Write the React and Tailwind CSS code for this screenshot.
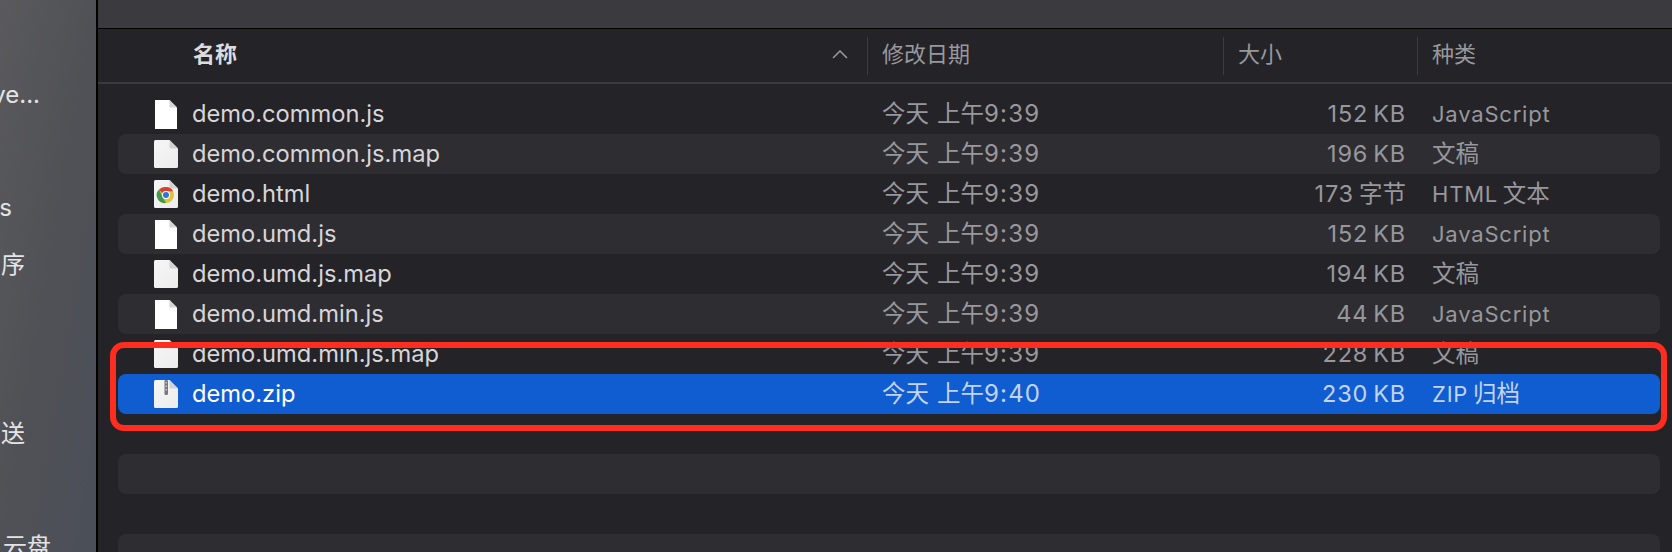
const files = [
  { name: 'demo.common.js', date: '今天 上午9:39', size: '152\u2009KB', kind: 'JavaScript', icon: 'js' },
  { name: 'demo.common.js.map', date: '今天 上午9:39', size: '196\u2009KB', kind: '文稿', icon: 'doc' },
  { name: 'demo.html', date: '今天 上午9:39', size: '173\u2009字节', kind: 'HTML\u2009文本', icon: 'chrome' },
  { name: 'demo.umd.js', date: '今天 上午9:39', size: '152\u2009KB', kind: 'JavaScript', icon: 'js' },
  { name: 'demo.umd.js.map', date: '今天 上午9:39', size: '194\u2009KB', kind: '文稿', icon: 'doc' },
  { name: 'demo.umd.min.js', date: '今天 上午9:39', size: '44\u2009KB', kind: 'JavaScript', icon: 'js' },
  { name: 'demo.umd.min.js.map', date: '今天 上午9:39', size: '228\u2009KB', kind: '文稿', icon: 'doc' },
  { name: 'demo.zip', date: '今天 上午9:40', size: '230\u2009KB', kind: 'ZIP\u2009归档', icon: 'zip', selected: true },
  {},
  {},
  {},
  {},
];

const sidebarItems = [
  { label: 've...', width: 'w-[40px]' },
  {},
  {},
  {},
  { label: 's', width: 'w-[12px]' },
  {},
  { label: '序', width: 'w-[25px]' },
  {},
  {},
  {},
  {},
  {},
  { label: '送', width: 'w-[25px]' },
  {},
  {},
  {},
  { label: '云盘', width: 'w-[51px]' },
];

// Latin and CJK runs need different sizes and tracking to match the macOS font
const MixedText = ({ text, latinClass }) =>
  text.split(/([\u4e00-\u9fff]+)/).map((part, i) =>
    i % 2 === 1 ? (
      <span key={i} className="text-[23.5px] tracking-normal">{part}</span>
    ) : (
      <span key={i} className={latinClass}>{part}</span>
    )
  );

const FileIcon = ({ type }) => {
  if (type === 'js') {
    return (
      <svg width="24" height="30" viewBox="0 0 24 30" className="shrink-0">
        <path d="M1 1H15.5L23 8.5V30H1Z" fill="#ffffff" />
        <path d="M15.5 1V8.5H23Z" fill="#d4d4d6" />
      </svg>
    );
  }
  return (
    <svg width="24" height="30" viewBox="0 0 24 30" className="shrink-0">
      <defs>
        <linearGradient id="page" x1="0" y1="0" x2="1" y2="1">
          <stop offset="0" stopColor="#f6f6f6" />
          <stop offset="1" stopColor="#ececec" />
        </linearGradient>
      </defs>
      <path d="M1.5 1H15.5L24 9.5V27.5Q24 29 22.5 29H1.5Q0 29 0 27.5V2.5Q0 1 1.5 1Z" fill="url(#page)" />
      <path d="M15.5 1V8Q15.5 9.5 17 9.5H24Z" fill="#d2d2d4" />
      {type === 'chrome' && (
        <g>
          <circle cx="12" cy="16" r="8" fill="#e0c33a" />
          <path d="M12 8A8 8 0 0 1 19 12.2H12A4 4 0 0 0 8.4 14.3L5 10.5A8 8 0 0 1 12 8Z" fill="#d8402f" />
          <path d="M5 10.5L8.6 18L12 24A8 8 0 0 1 5 10.5Z" fill="#3f9a4a" />
          <circle cx="12" cy="16" r="4" fill="#ffffff" />
          <circle cx="12" cy="16" r="3" fill="#2f73e0" />
        </g>
      )}
      {type === 'zip' && (
        <g>
          <rect x="10.5" y="1" width="3.5" height="15" rx="1.2" fill="#77787c" />
          <rect x="11.5" y="3" width="1.5" height="1.5" fill="#c4c4c6" />
          <rect x="11.5" y="6.5" width="1.5" height="1.5" fill="#c4c4c6" />
          <rect x="11.5" y="10" width="1.5" height="1.5" fill="#c4c4c6" />
        </g>
      )}
    </svg>
  );
};

const FileRow = ({ file, striped }) => {
  const bg = file.selected ? 'bg-[#0f5dd0]' : striped ? 'bg-[#2e2d32]' : '';
  return (
    <div className={`flex items-center h-10 shrink-0 rounded-[8px] ${bg}`}>
      {file.name && (
        <>
          <div className={`flex items-center w-[764px] pl-9 gap-[14px] text-[23.7px] ${file.selected ? 'text-white' : 'text-[#d6d6d8]'}`}>
            <FileIcon type={file.icon} />
            <span>{file.name}</span>
          </div>
          <div className={`flex items-center flex-1 ${file.selected ? 'text-[#c3d3f1]' : 'text-[#98989c]'}`}>
            <span className="w-[356px]"><MixedText text={file.date} latinClass="text-[24px] tracking-[1.2px]" /></span>
            <span className="w-[168px] text-right"><MixedText text={file.size} latinClass="text-[23.5px] tracking-[0.8px]" /></span>
            <span className="ml-[26px]"><MixedText text={file.kind} latinClass="tracking-[0.8px]" /></span>
          </div>
        </>
      )}
    </div>
  );
};

const HeaderCell = ({ label, width }) => (
  <div className={`flex items-center h-[38px] border-l border-[#3c3b40] pl-[14px] pb-[3px] text-[#98989c] ${width}`}>
    {label}
  </div>
);

export default function App() {
  return (
    <div className="relative flex h-[552px] w-[1672px] overflow-hidden bg-[#242328] text-[22px] leading-none font-['Inter','Noto_Sans_CJK_SC',sans-serif]">
      {/* sidebar, cut off on the left */}
      <div className="flex flex-col w-[96px] shrink-0 pt-[81px] overflow-hidden bg-gradient-to-br from-[#5a5a5d] via-[#505156] to-[#4a4f58] text-[24px] text-[#e4e4e6]">
        {sidebarItems.map((item, i) => (
          <div key={i} className={`flex items-center justify-end h-[28.25px] shrink-0 whitespace-nowrap ${item.width || ''}`}>
            {item.label}
          </div>
        ))}
      </div>
      <div className="w-[2px] shrink-0 bg-black" />

      <div className="flex flex-col flex-1 min-w-0">
        <div className="h-[28px] shrink-0 bg-[#3b3a3f]" />
        <div className="h-px shrink-0 bg-black" />

        <div className="flex items-center h-[55px] shrink-0 border-b-2 border-[#3a393e]">
          <div className="w-[769px] flex items-center pl-[95px] pr-[19px] pb-[3px] justify-between font-semibold text-[#dcdcde]">
            <span>名称</span>
            <svg width="16" height="9" viewBox="0 0 16 9" fill="none" stroke="#9a9a9c" strokeWidth="1.5">
              <path d="M1 8L8 1L15 8" />
            </svg>
          </div>
          <HeaderCell label="修改日期" width="w-[356px]" />
          <HeaderCell label="大小" width="w-[194px]" />
          <HeaderCell label="种类" width="flex-1" />
        </div>

        <div className="flex flex-col pt-[10px] pl-[20px] pr-[12px]">
          {files.map((file, i) => (
            <FileRow key={i} file={file} striped={i % 2 === 1} />
          ))}
        </div>
      </div>

      {/* red annotation drawn over the screenshot */}
      <div className="absolute left-[110px] top-[342px] w-[1557px] h-[89px] rounded-[14px] border-[6px] border-[#ff2d20]" />
    </div>
  );
}
